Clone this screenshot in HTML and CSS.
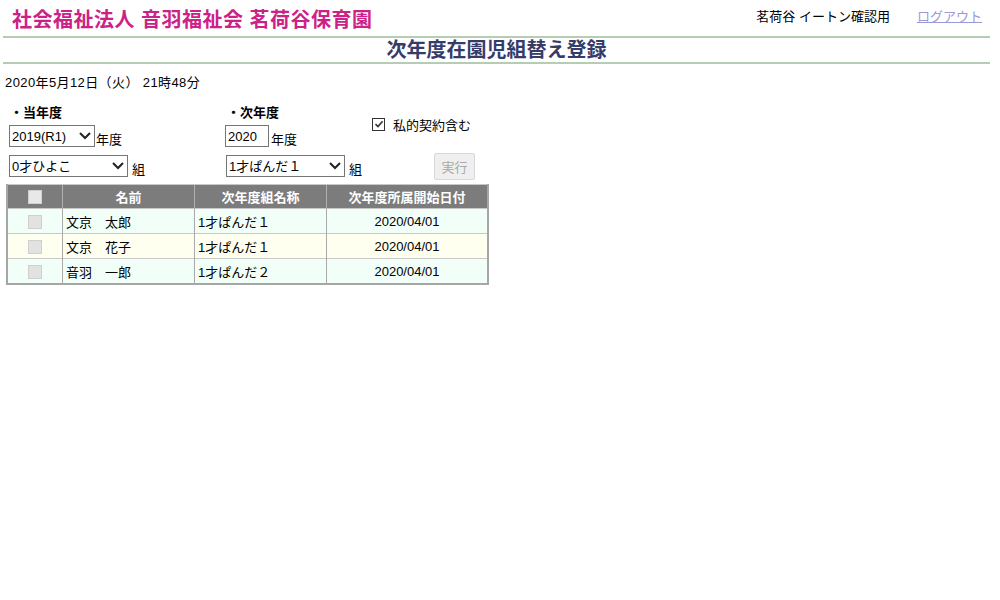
FILE: index.html
```html
<!DOCTYPE html>
<html lang="ja">
<head>
    <meta charset="UTF-8">
    <title>次年度在園児組替え登録</title>
    <link rel="stylesheet" href="styles.css">
</head>
<body>
    <header class="site-header">
        <h1 class="site-title">社会福祉法人 音羽福祉会 茗荷谷保育園</h1>
        <div class="user-box">
            <span class="user-name">茗荷谷 イートン確認用</span>
            <a href="#" class="logout">ログアウト</a>
        </div>
    </header>

    <div class="page-title">次年度在園児組替え登録</div>

    <p class="now">2020年5月12日（火） 21時48分</p>

    <!-- 検索条件 -->
    <div class="conditions">
        <div class="cond-label">・当年度</div>
        <div class="cond-label">・次年度</div>
        <label class="private">
            <span class="check on">
                <svg width="10" height="10" viewBox="0 0 10 10"><path d="M1.5 5.2 L4 7.6 L8.6 2.2" fill="none" stroke="#333" stroke-width="1.6"/></svg>
            </span>
            私的契約含む
        </label>

        <div class="cond-field">
            <span class="select-wrap w-year">
                <select class="select"><option>2019(R1)</option></select>
                <svg class="chev" width="12" height="8" viewBox="0 0 12 8"><path d="M1 1 L6 6 L11 1" fill="none" stroke="#222" stroke-width="2"/></svg>
            </span>
            <span class="unit tight">年度</span>
        </div>
        <div class="cond-field">
            <input type="text" class="year-input" value="2020">
            <span class="unit near">年度</span>
        </div>

        <div class="cond-field">
            <span class="select-wrap w-class">
                <select class="select"><option>0才ひよこ</option></select>
                <svg class="chev" width="12" height="8" viewBox="0 0 12 8"><path d="M1 1 L6 6 L11 1" fill="none" stroke="#222" stroke-width="2"/></svg>
            </span>
            <span class="unit">組</span>
        </div>
        <div class="cond-field">
            <span class="select-wrap w-class">
                <select class="select"><option>1才ぱんだ１</option></select>
                <svg class="chev" width="12" height="8" viewBox="0 0 12 8"><path d="M1 1 L6 6 L11 1" fill="none" stroke="#222" stroke-width="2"/></svg>
            </span>
            <span class="unit">組</span>
        </div>
        <div class="cond-field">
            <button class="run" disabled>実行</button>
        </div>
    </div>

    <!-- 園児一覧 -->
    <table class="list">
        <thead>
            <tr>
                <th class="col-check"><span class="check head"></span></th>
                <th class="col-name">名前</th>
                <th class="col-class">次年度組名称</th>
                <th class="col-date">次年度所属開始日付</th>
            </tr>
        </thead>
        <tbody>
            <tr class="row-a">
                <td class="center"><span class="check off"></span></td>
                <td>文京　太郎</td>
                <td>1才ぱんだ１</td>
                <td class="center">2020/04/01</td>
            </tr>
            <tr class="row-b">
                <td class="center"><span class="check off"></span></td>
                <td>文京　花子</td>
                <td>1才ぱんだ１</td>
                <td class="center">2020/04/01</td>
            </tr>
            <tr class="row-a">
                <td class="center"><span class="check off"></span></td>
                <td>音羽　一郎</td>
                <td>1才ぱんだ２</td>
                <td class="center">2020/04/01</td>
            </tr>
        </tbody>
    </table>
</body>
</html>
```

FILE: styles.css
```css
body {
    margin: 0;
    font-family: "Liberation Sans", "Noto Sans CJK JP", sans-serif;
    font-size: 13px;
    color: #000;
    background: #fff;
}

.site-header {
    display: flex;
    align-items: center;
    justify-content: space-between;
    height: 36px;
    margin: 0 10px 0 3px;
    padding-left: 9px;
    border-bottom: 2px solid #b5cdb3;
}

.site-title {
    margin: 0;
    font-size: 20px;
    letter-spacing: 0.5px;
    font-weight: bold;
    color: #cc2288;
}

.user-box {
    display: flex;
    align-items: center;
    gap: 27px;
    padding-right: 8px;
    margin-top: -6px;
}

.user-name {
    font-size: 13px;
}

.logout {
    color: #9a9ad8;
    text-decoration: underline;
    font-size: 13px;
}

.page-title {
    margin: 0 10px 0 3px;
    height: 24px;
    line-height: 24px;
    text-align: center;
    font-size: 20px;
    font-weight: bold;
    color: #363c6a;
    border-bottom: 2px solid #b5cdb3;
}

.now {
    margin: 9px 0 0 5px;
    font-size: 13px;
    letter-spacing: 0.4px;
    line-height: 20px;
}

.conditions {
    display: grid;
    grid-template-columns: 217px 146px 120px;
    grid-template-rows: 20px 30px 30px;
    margin: 8px 0 0 9px;
    align-items: center;
}

.cond-label {
    font-weight: bold;
    font-size: 13px;
    padding-left: 1px;
}

.private {
    grid-column: 3;
    grid-row: 1 / 3;
    display: flex;
    align-items: center;
    gap: 8px;
    margin-top: -4px;
    font-size: 13px;
}

.cond-field {
    display: flex;
    align-items: center;
}

.select-wrap {
    position: relative;
    display: inline-block;
    height: 22px;
}

.select {
    appearance: none;
    -webkit-appearance: none;
    height: 22px;
    width: 100%;
    margin: 0;
    padding: 0 0 0 2px;
    border: 1px solid #767676;
    border-radius: 0;
    background: #fff;
    font-family: "Liberation Sans", "Noto Sans CJK JP", sans-serif;
    font-size: 13px;
    color: #000;
}

.chev {
    position: absolute;
    right: 4px;
    top: 7px;
    pointer-events: none;
}

.w-year {
    width: 86px;
}

.w-class {
    width: 119px;
}

.unit {
    margin-left: 4px;
    font-size: 13px;
    padding-top: 4px;
    color: #000;
}

.unit.tight {
    margin-left: 1px;
}

.unit.near {
    margin-left: 2px;
}

.year-input {
    width: 44px;
    height: 22px;
    box-sizing: border-box;
    margin: 0 0 0 -1px;
    padding: 0 2px;
    border: 1px solid #767676;
    font-family: "Liberation Sans", "Noto Sans CJK JP", sans-serif;
    font-size: 13px;
}

.run {
    margin-left: 62px;
    width: 41px;
    height: 27px;
    padding: 0;
    border: 1px solid #d8d8d8;
    border-radius: 2px;
    background: #efefef;
    color: #a8a8a8;
    font-family: "Liberation Sans", "Noto Sans CJK JP", sans-serif;
    font-size: 13px;
}

.check {
    display: inline-block;
    box-sizing: border-box;
    width: 14px;
    height: 14px;
    vertical-align: middle;
}

.check.on {
    border: 1px solid #333;
    background: #fff;
    display: inline-flex;
    align-items: center;
    justify-content: center;
    width: 13px;
    height: 13px;
}

.check.off {
    border: 1px solid #cfcfcf;
    background: #e2e2e2;
}

.check.head {
    border: 1px solid #cfcfcf;
    background: #e8e8e8;
}

.list {
    margin: 3px 0 0 6px;
    border-collapse: collapse;
    width: 483px;
    border-left: 2px solid #a6a6a6;
    border-right: 2px solid #a6a6a6;
    border-bottom: 2px solid #a6a6a6;
    table-layout: fixed;
}

.list th {
    height: 23px;
    padding: 0;
    background: #7c7c7c;
    border-top: 1px solid #c8c8c8;
    border-left: 1px solid #b0b0b0;
    color: #fff;
    font-weight: bold;
    font-size: 13px;
}

.list td {
    height: 24px;
    padding: 0 3px;
    border-top: 1px solid #c8c8c8;
    border-left: 1px solid #a9a9a9;
    font-size: 13px;
}

.list .center {
    text-align: center;
}

.col-check {
    width: 54px;
}

.col-name,
.col-class {
    width: 131px;
}

.row-a td {
    background: #f1fff8;
}

.row-b td {
    background: #fffff0;
}
```
